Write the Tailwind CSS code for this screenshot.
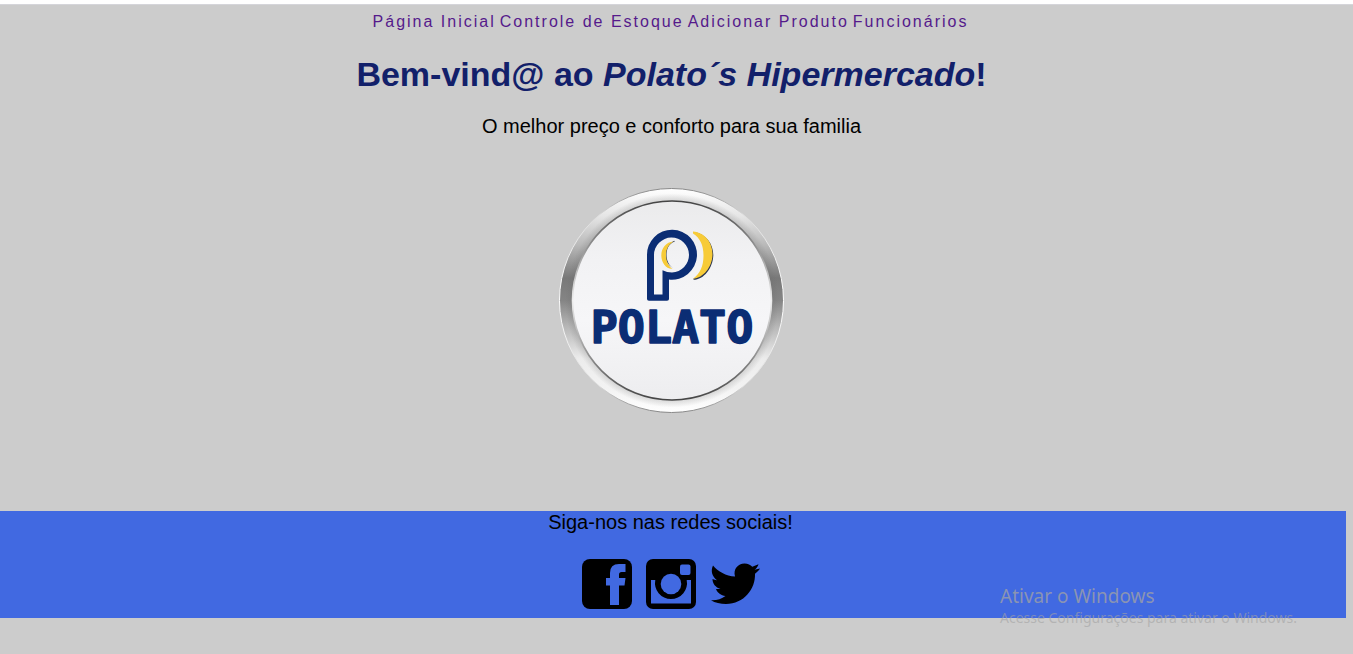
<!DOCTYPE html>
<html lang="pt-BR">
<head>
<meta charset="utf-8">
<meta name="viewport" content="width=device-width, initial-scale=1">
<title>Polato´s Hipermercado</title>
<script src="https://cdn.jsdelivr.net/npm/@tailwindcss/browser@4"></script>
</head>
<body class="relative min-h-screen border-t-4 border-white bg-[#ccc] font-['Liberation_Sans',Arial,sans-serif] text-xl text-black">
<div class="border-t border-[#d5d5da]">
  <header class="pr-3 pt-[5px] text-center">
    <nav class="flex flex-wrap justify-center gap-x-1 text-base leading-6 text-[#551a8b]">
      <a href="#inicio" class="tracking-[2px]">Página Inicial</a>
      <a href="#estoque" class="tracking-[2px]">Controle de Estoque</a>
      <a href="#adicionar" class="tracking-[2px]">Adicionar Produto</a>
      <a href="#funcionarios" class="tracking-[2px]">Funcionários</a>
    </nav>
  </header>
  <main id="inicio" class="pr-[10px] text-center">
    <h1 class="mt-5 text-[34px] leading-10 font-bold text-[#12206a]">Bem-vind@ ao <em>Polato´s Hipermercado</em>!</h1>
    <p class="mt-5 leading-6">O melhor preço e conforto para sua familia</p>
    <svg class="mx-auto mt-[50px] block size-[226px]" viewBox="0 0 226 226" role="img" aria-label="Polato">
      <defs>
        <linearGradient id="ring" x1="0" y1="0" x2="0" y2="1">
          <stop offset="0" stop-color="#fff"/>
          <stop offset=".12" stop-color="#e6e6e6"/>
          <stop offset=".25" stop-color="#bababa"/>
          <stop offset=".4" stop-color="#787878"/>
          <stop offset=".5" stop-color="#858585"/>
          <stop offset=".62" stop-color="#b8b8b8"/>
          <stop offset=".76" stop-color="#ececec"/>
          <stop offset=".9" stop-color="#f3f3f3"/>
          <stop offset="1" stop-color="#fff"/>
        </linearGradient>
        <linearGradient id="rim" x1="0" y1="0" x2="0" y2="1">
          <stop offset="0" stop-color="#888"/>
          <stop offset=".12" stop-color="#ddd"/>
          <stop offset=".5" stop-color="#fff"/>
          <stop offset=".88" stop-color="#ddd"/>
          <stop offset="1" stop-color="#888"/>
        </linearGradient>
        <linearGradient id="edge" x1="0" y1="0" x2="0" y2="1">
          <stop offset="0" stop-color="#444"/>
          <stop offset=".25" stop-color="#999"/>
          <stop offset=".5" stop-color="#eee"/>
          <stop offset=".75" stop-color="#999"/>
          <stop offset="1" stop-color="#444"/>
        </linearGradient>
        <linearGradient id="disc" x1="0" y1="0" x2="0" y2="1">
          <stop offset="0" stop-color="#ebebec"/>
          <stop offset=".3" stop-color="#f2f2f4"/>
          <stop offset=".6" stop-color="#f6f6f8"/>
          <stop offset="1" stop-color="#ededef"/>
        </linearGradient>
        <radialGradient id="shade">
          <stop offset=".93" stop-color="#666" stop-opacity=".22"/>
          <stop offset="1" stop-color="#666" stop-opacity="0"/>
        </radialGradient>
      </defs>
      <circle cx="112.500" cy="112.500" r="112" fill="url(#ring)" stroke="url(#rim)"/>
      <circle cx="113" cy="112.500" r="107" fill="url(#shade)"/>
      <circle cx="113" cy="112.500" r="99.500" fill="url(#disc)" stroke="url(#edge)" stroke-width="1.600"/>
      <path fill="#0b2d74" fill-rule="evenodd" d="M88 111V67.500A25 25 0 1 1 110 91.500V111Q110 112.700 108 112.700H90Q88 112.700 88 111ZM95 106.500H103.500V82.300Q108 84.500 113 84.500A17.500 17.500 0 1 0 95 67Z"/>
      <path fill="#263451" d="M115.800 53.500C109 56 107.500 62 107.500 67C107.500 72 109.500 77 114 80C109 77 106 72 106 67C106 61 109 55.500 115.300 52.800Z"/>
      <path fill="#f7cb38" d="M114.500 53.500C107 54 102.300 60 102.300 67.500C102.300 75 107.500 81.500 113.500 80.800C109 78 107 72.500 107 67C107 61 109.500 56.500 114.500 53.500Z"/>
      <path fill="#2d3750" d="M135 44C147 46 154.500 56 154.300 67.500C153.800 80 145 91.700 134.500 91.800V90.500C144 88 152 77 153 67C153 55 145 47 135 44Z"/>
      <path fill="#f7cb38" d="M134 43.500C146 44.500 154 55 153.500 67C153 79 144.500 90 134 90.800C141 86 144.500 78 144.500 67.500C144.500 57 141 50 134 45.500Z"/>
      <text x="113" y="155" text-anchor="middle" fill="#0b2d74" stroke="#0b2d74" stroke-width="1.500" stroke-linejoin="round" font-family="DejaVu Sans Mono, monospace" font-size="45" font-weight="700">POLATO</text>
    </svg>
  </main>
  <footer class="mt-[97px] mr-[7px] bg-[#4169e1] pr-[5px] pb-[9px] text-center">
    <p class="leading-[22px]">Siga-nos nas redes sociais!</p>
    <div class="mt-[26px] flex justify-center gap-[14px]">
      <a href="#facebook" aria-label="Facebook">
        <svg class="block size-[50px]" viewBox="0 0 50 50"><rect width="50" height="50" rx="8"/><path fill="#4169e1" d="M28 46V26.500H24V19H28V14Q28 5 37 5H43.500V13H39.500Q37 13 37 15.500V19H43.500L42.500 26.500H37V46Z"/></svg>
      </a>
      <a href="#instagram" aria-label="Instagram">
        <svg class="block size-[50px]" viewBox="0 0 50 50"><rect width="50" height="50" rx="7"/><path fill="#4169e1" d="M5 21H9.300A16 16 0 1 0 40.700 21H45V44.500H5Z"/><circle cx="25" cy="25" r="10.300" fill="#4169e1"/><rect x="34" y="5.500" width="10.500" height="10.500" rx="2" fill="#4169e1"/></svg>
      </a>
      <a href="#twitter" aria-label="Twitter">
        <svg class="block size-[50px]" viewBox="0 0 50 50"><path d="M3 6.500C8 12.500 16 17 25 17.500C23 10 28 4.500 34.500 4.500C38 4.500 40.500 6 42.300 7.800L48.500 5.300C48 7.500 46.500 9.500 44.500 10.800L50 9.500C48.800 11.500 47 13.300 45 14.800C45.500 30 34 45 16 45C10.500 45 5 43.800 1 41.200C6.500 41.500 11.500 40 15.500 37C11 36.500 7.500 34 6 30H10.500C5.500 28.500 2.500 24.500 2.500 20Q4.500 21 7 21.200C2 17.500 .500 12 3 6.500Z"/></svg>
      </a>
    </div>
  </footer>
</div>
<aside class="pointer-events-none absolute top-[578px] right-[56px] font-['Noto_Sans',sans-serif] text-[#a3a3a3]/75">
  <p class="text-[19px] leading-7">Ativar o Windows</p>
  <p class="text-sm leading-4 text-[#a3a3a3]/60">Acesse Configurações para ativar o Windows.</p>
</aside>
</body>
</html>
